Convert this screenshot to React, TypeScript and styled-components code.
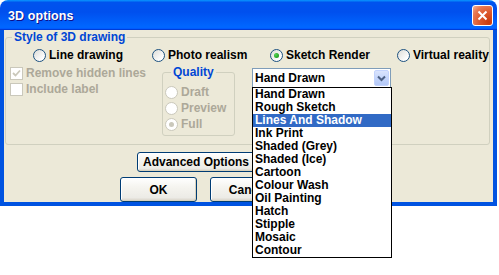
import React from "react";
import styled, { createGlobalStyle } from "styled-components";

const GlobalStyle = createGlobalStyle`
  html, body {
    margin: 0;
    padding: 0;
    background: #fff;
  }
  body {
    font-family: "Liberation Sans", Arial, sans-serif;
    font-size: 12px;
    font-weight: bold;
    color: #000;
  }
  #root {
    min-height: 275px;
  }
`;

const Window = styled.div`
  width: 497px;
  display: flex;
  flex-direction: column;
`;

const TitleBar = styled.div`
  height: 30px;
  box-sizing: border-box;
  display: flex;
  align-items: center;
  justify-content: space-between;
  padding: 0 4px 0 8px;
  border-radius: 8px 8px 0 0;
  background: linear-gradient(
    180deg,
    #0997ff 0%,
    #0053ee 8%,
    #0050ee 40%,
    #0066ff 88%,
    #0066ff 93%,
    #005bff 95%,
    #003dd7 96%,
    #003dd7 100%
  );
`;

const Title = styled.span`
  color: #fff;
  font-size: 12.5px;
  letter-spacing: 0.1px;
  text-shadow: 1px 1px #0f1089;
  margin-top: 1px;
`;

const CloseButton = styled.div`
  width: 21px;
  height: 21px;
  box-sizing: border-box;
  border: 1px solid #fff;
  border-radius: 3px;
  display: flex;
  align-items: center;
  justify-content: center;
  background: radial-gradient(
    circle at 85% 85%,
    #c93b0e 0%,
    #dd5a2d 45%,
    #e77a55 75%,
    #f2b49b 100%
  );
`;

const Frame = styled.div`
  height: 176px;
  box-sizing: border-box;
  background: #ece9d8;
  border: 4px solid #0053e1;
  border-top: none;
  display: flex;
  flex-direction: column;
`;

const GroupBox = styled.fieldset`
  margin: 1px 3px 0 1px;
  padding: 0 0 8px 0;
  border: 1px solid #d0d0bf;
  border-radius: 3px;
  min-width: 0;
`;

const GroupLabel = styled.legend`
  margin-left: 6px;
  padding: 0 2px;
  line-height: 12px;
  color: #0046d5;
`;

const RadioRow = styled.div`
  display: grid;
  grid-template-columns: 119px 118px 127px auto;
  padding-left: 27px;
  margin-top: 6px;
`;

const Option = styled.label<{ $disabled?: boolean }>`
  display: flex;
  align-items: center;
  gap: 3px;
  height: 13px;
  line-height: 13px;
  white-space: nowrap;
  color: ${(p) => (p.$disabled ? "#aca899" : "#000")};
`;

const RadioCircle = styled.span<{ $checked?: boolean; $disabled?: boolean }>`
  width: 13px;
  height: 13px;
  flex: none;
  box-sizing: border-box;
  border-radius: 50%;
  border: 1px solid ${(p) => (p.$disabled ? "#cac8bb" : "#1c5180")};
  background: ${(p) =>
    p.$disabled ? "#fff" : "linear-gradient(135deg, #dcdcd7 0%, #fff 80%)"};
  display: flex;
  align-items: center;
  justify-content: center;

  &::after {
    content: "";
    display: ${(p) => (p.$checked ? "block" : "none")};
    width: 5px;
    height: 5px;
    border-radius: 50%;
    background: ${(p) =>
      p.$disabled
        ? "#cac8bb"
        : "radial-gradient(circle at 35% 35%, #55d355 0%, #21a121 70%, #1a7d1a 100%)"};
  }
`;

const CheckBox = styled.span<{ $disabled?: boolean }>`
  width: 13px;
  height: 13px;
  flex: none;
  box-sizing: border-box;
  border: 1px solid ${(p) => (p.$disabled ? "#cac8bb" : "#1c5180")};
  background: #fff;
  display: flex;
  align-items: center;
  justify-content: center;
`;

const OptionsRow = styled.div`
  display: flex;
  align-items: flex-start;
  margin-top: 4px;
`;

const CheckColumn = styled.div`
  width: 156px;
  box-sizing: border-box;
  padding: 1px 0 0 4px;
  display: flex;
  flex-direction: column;
  gap: 3px;
`;

const QualityBox = styled.fieldset`
  width: 73px;
  box-sizing: border-box;
  margin: 0;
  padding: 8px 0 4px 2px;
  border: 1px solid #d0d0bf;
  border-radius: 3px;
  min-width: 0;
  display: flex;
  flex-direction: column;
  gap: 3px;
`;

const Combo = styled.div`
  position: relative;
  width: 139px;
  height: 20px;
  box-sizing: border-box;
  margin: 2px 0 0 17px;
  border: 1px solid #7f9db9;
  background: #fff;
  display: flex;
  align-items: center;
  justify-content: space-between;
  padding-left: 2px;
`;

const ComboText = styled.span`
  line-height: 16px;
`;

const ComboButton = styled.span`
  width: 15px;
  height: 16px;
  margin-right: 1px;
  box-sizing: border-box;
  border: 1px solid #c3d3fd;
  border-radius: 2px;
  background: linear-gradient(180deg, #dae4fd 0%, #c1d3fb 60%, #b4c8f7 100%);
  display: flex;
  align-items: center;
  justify-content: center;
`;

const DropList = styled.div`
  position: absolute;
  top: 100%;
  left: -1px;
  width: 140px;
  box-sizing: border-box;
  border: 1px solid #000;
  background: #fff;
  z-index: 10;
`;

const ListItem = styled.div<{ $selected?: boolean }>`
  height: 13px;
  line-height: 13px;
  padding-left: 2px;
  white-space: nowrap;
  background: ${(p) => (p.$selected ? "#316ac5" : "transparent")};
  color: ${(p) => (p.$selected ? "#fff" : "#000")};
`;

const Button = styled.div<{ $width: number; $height: number }>`
  width: ${(p) => p.$width}px;
  height: ${(p) => p.$height}px;
  box-sizing: border-box;
  flex: none;
  border: 1px solid #003c74;
  border-radius: 3px;
  background: linear-gradient(180deg, #fff 0%, #f5f4ef 40%, #ecebe6 85%, #d6d0c5 100%);
  box-shadow: inset -1px -1px 0 #d8d2bd, inset 1px 1px 0 #fff;
  display: flex;
  align-items: center;
  justify-content: center;
`;

const AdvancedButton = styled(Button)`
  justify-content: flex-start;
  padding-left: 5px;
  margin: 7px 0 0 133px;
`;

const ButtonRow = styled.div`
  display: flex;
  gap: 13px;
  margin-top: 5px;
  padding-left: 116px;
`;

const styles = [
  "Hand Drawn",
  "Rough Sketch",
  "Lines And Shadow",
  "Ink Print",
  "Shaded (Grey)",
  "Shaded (Ice)",
  "Cartoon",
  "Colour Wash",
  "Oil Painting",
  "Hatch",
  "Stipple",
  "Mosaic",
  "Contour",
];

const drawModes = [
  { label: "Line drawing", checked: false },
  { label: "Photo realism", checked: false },
  { label: "Sketch Render", checked: true },
  { label: "Virtual reality", checked: false },
];

const qualities = [
  { label: "Draft", checked: false },
  { label: "Preview", checked: false },
  { label: "Full", checked: true },
];

export default function App() {
  return (
    <>
      <GlobalStyle />
      <Window>
        <TitleBar>
          <Title>3D options</Title>
          <CloseButton>
            <svg width="11" height="11" viewBox="0 0 11 11">
              <path d="M1.5 1.5 L9.5 9.5 M9.5 1.5 L1.5 9.5" stroke="#fff" strokeWidth="2" />
            </svg>
          </CloseButton>
        </TitleBar>
        <Frame>
          <GroupBox>
            <GroupLabel>Style of 3D drawing</GroupLabel>
            <RadioRow>
              {drawModes.map((m) => (
                <Option key={m.label}>
                  <RadioCircle $checked={m.checked} />
                  {m.label}
                </Option>
              ))}
            </RadioRow>
            <OptionsRow>
              <CheckColumn>
                <Option $disabled>
                  <CheckBox $disabled>
                    <svg width="9" height="9" viewBox="0 0 9 9">
                      <path d="M1 4 L3.5 6.5 L8 1.5" stroke="#cac8bb" strokeWidth="1.8" fill="none" />
                    </svg>
                  </CheckBox>
                  Remove hidden lines
                </Option>
                <Option $disabled>
                  <CheckBox $disabled />
                  Include label
                </Option>
              </CheckColumn>
              <QualityBox>
                <GroupLabel>Quality</GroupLabel>
                {qualities.map((q) => (
                  <Option key={q.label} $disabled>
                    <RadioCircle $checked={q.checked} $disabled />
                    {q.label}
                  </Option>
                ))}
              </QualityBox>
              <Combo>
                <ComboText>Hand Drawn</ComboText>
                <ComboButton>
                  <svg width="9" height="7" viewBox="0 0 9 7">
                    <path d="M1 1.5 L4.5 5 L8 1.5" stroke="#4d6185" strokeWidth="2" fill="none" />
                  </svg>
                </ComboButton>
                <DropList>
                  {styles.map((s) => (
                    <ListItem key={s} $selected={s === "Lines And Shadow"}>
                      {s}
                    </ListItem>
                  ))}
                </DropList>
              </Combo>
            </OptionsRow>
          </GroupBox>
          <AdvancedButton $width={118} $height={20}>
            Advanced Options
          </AdvancedButton>
          <ButtonRow>
            <Button $width={77} $height={25}>OK</Button>
            <Button $width={77} $height={25}>Cancel</Button>
          </ButtonRow>
        </Frame>
      </Window>
    </>
  );
}
